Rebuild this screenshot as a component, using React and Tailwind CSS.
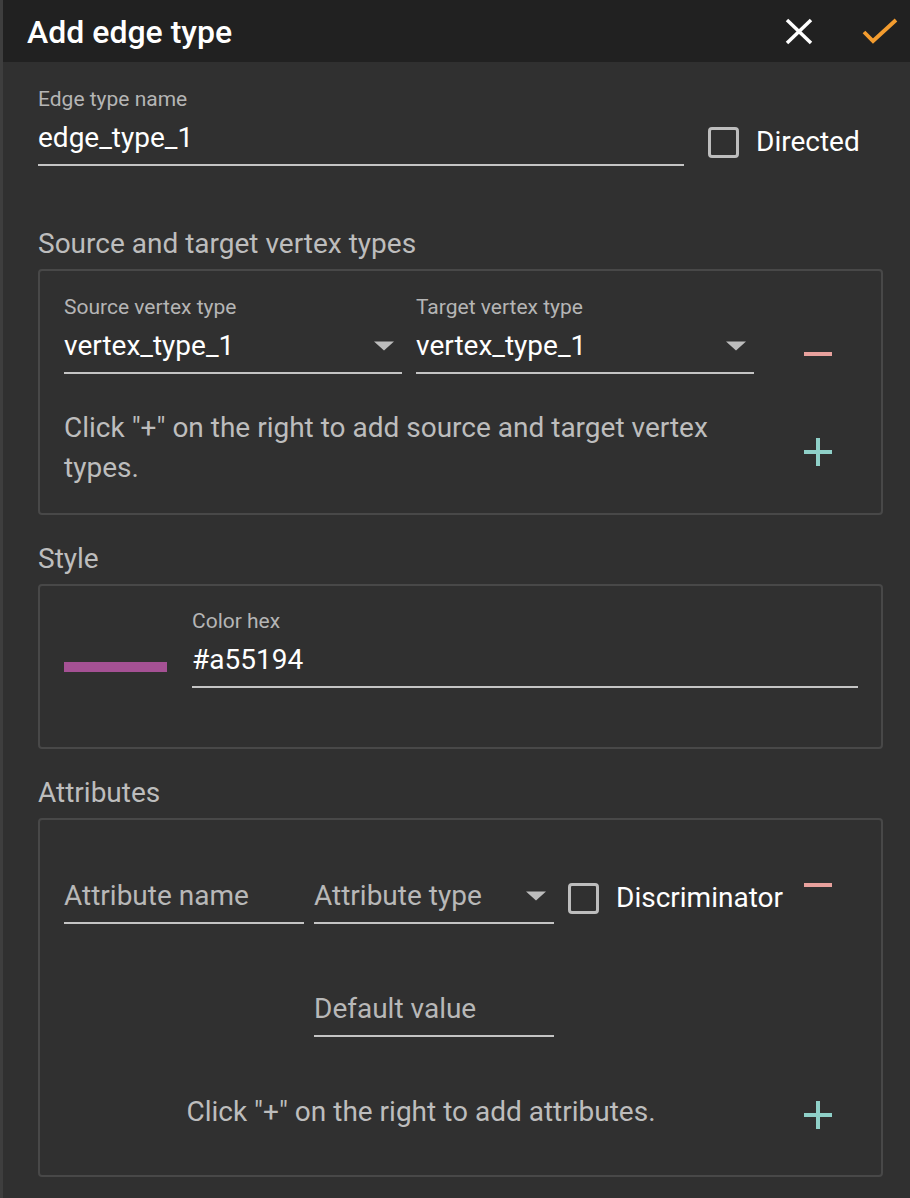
import React from 'react';

const labelCls = 'h-[24px] text-[21px] leading-[24px] text-[#b5b5b5] whitespace-nowrap';

function Arrow() {
  return (
    <svg width="20" height="10" viewBox="0 0 20 10" className="mr-[8px] shrink-0">
      <polygon points="0,0.5 20,0.5 10,9.5" fill="#bdbdbd" />
    </svg>
  );
}

function Field({ label, value, placeholder, select, className = '' }) {
  return (
    <div className={'flex flex-col ' + className}>
      <div className={labelCls}>{label}</div>
      <div className="mt-[11px] flex h-[32px] items-center justify-between">
        {value ? (
          <span className="text-[28px] leading-[32px] text-white whitespace-nowrap">{value}</span>
        ) : (
          <span className="text-[28px] leading-[32px] text-[#b8b8b8] whitespace-nowrap">{placeholder}</span>
        )}
        {select && <Arrow />}
      </div>
      <div className="mt-[10px] h-[2px] bg-[#c4c4c4]" />
    </div>
  );
}

function Checkbox({ label, className = '' }) {
  return (
    <div className={'flex items-center gap-[17px] ' + className}>
      <div className="h-[31px] w-[31px] shrink-0 rounded-[4px] border-[3px] border-[#bdbdbd]" />
      <span className="text-[28px] leading-[32px] text-white whitespace-nowrap">{label}</span>
    </div>
  );
}

function Minus({ className = '' }) {
  return <div className={'h-[4px] w-[28px] shrink-0 bg-[#e8a19d] ' + className} />;
}

function Plus({ className = '' }) {
  return (
    <svg width="28" height="28" viewBox="0 0 28 28" className={'shrink-0 ' + className}>
      <rect x="12" y="0" width="4" height="28" fill="#8fd0c8" />
      <rect x="0" y="12" width="28" height="4" fill="#8fd0c8" />
    </svg>
  );
}

function Heading({ children, className = '' }) {
  return (
    <div className={'mb-[9px] text-[28px] leading-[32px] text-[#bdbdbd] ' + className}>{children}</div>
  );
}

export default function App() {
  return (
    <div className="min-h-[1198px] border-l-[3px] border-[#3e3e3e] bg-[#303030] font-['Roboto',sans-serif]">
      {/* header */}
      <div className="flex h-[62px] items-center bg-[#212121] pl-[24px] pr-[12px]">
        <h1 className="pt-[1px] text-[32px] font-medium text-white">Add edge type</h1>
        <svg width="28" height="27" viewBox="0 0 28 27" className="ml-auto">
          <line x1="2" y1="2" x2="26" y2="25" stroke="#fff" strokeWidth="3.5" />
          <line x1="26" y1="2" x2="2" y2="25" stroke="#fff" strokeWidth="3.5" />
        </svg>
        <svg width="36" height="26" viewBox="0 0 36 26" className="ml-[49px]">
          <polyline points="2,14 11,23 34,2" fill="none" stroke="#f39c2f" strokeWidth="3.8" />
        </svg>
      </div>

      <div className="pl-[35px] pr-[27px] pt-[25px] pb-[21px]">
        {/* name + directed */}
        <div className="flex items-start">
          <Field label="Edge type name" value="edge_type_1" className="w-[646px]" />
          <Checkbox label="Directed" className="ml-[24px] mt-[39px] gap-[17px]" />
        </div>

        {/* source / target */}
        <Heading className="mt-[62px]">Source and target vertex types</Heading>
        <div className="rounded-[4px] border-2 border-[#484848] pl-[24px] pt-[24px] pb-[25px]">
          <div className="flex items-start">
            <div className="flex w-[690px] gap-[14px]">
              <Field label="Source vertex type" value="vertex_type_1" select className="w-[338px]" />
              <Field label="Target vertex type" value="vertex_type_1" select className="w-[338px]" />
            </div>
            <Minus className="ml-auto mr-[49px] mt-[57px]" />
          </div>
          <div className="mt-[34px] flex items-start">
            <p className="w-[690px] text-[28px] leading-[40px] text-[#bdbdbd]">
              Click "+" on the right to add source and target vertex types.
            </p>
            <Plus className="ml-auto mr-[49px] mt-[30px]" />
          </div>
        </div>

        {/* style */}
        <Heading className="mt-[28px]">Style</Heading>
        <div className="flex items-start rounded-[4px] border-2 border-[#484848] pl-[24px] pr-[23px] pt-[23px] pb-[59px]">
          <div className="mt-[53px] h-[10px] w-[103px] shrink-0 bg-[#a55194]" />
          <Field label="Color hex" value="#a55194" className="ml-[25px] flex-1" />
        </div>

        {/* attributes */}
        <Heading className="mt-[28px]">Attributes</Heading>
        <div className="rounded-[4px] border-2 border-[#484848] pl-[24px] pt-[25px] pb-[43px]">
          <div className="flex items-start">
            <Field label="" placeholder="Attribute name" className="w-[240px]" />
            <Field label="" placeholder="Attribute type" select className="ml-[10px] w-[240px]" />
            <Checkbox label="Discriminator" className="ml-[14px] mt-[37px]" />
            <Minus className="ml-auto mr-[49px] mt-[38px]" />
          </div>
          <Field label="" placeholder="Default value" className="ml-[250px] mt-[34px] w-[240px]" />
          <div className="mt-[55px] flex items-start">
            <p className="w-[714px] text-center text-[28px] leading-[40px] text-[#bdbdbd]">
              Click "+" on the right to add attributes.
            </p>
            <Plus className="ml-auto mr-[49px] mt-[9px]" />
          </div>
        </div>
      </div>
    </div>
  );
}
